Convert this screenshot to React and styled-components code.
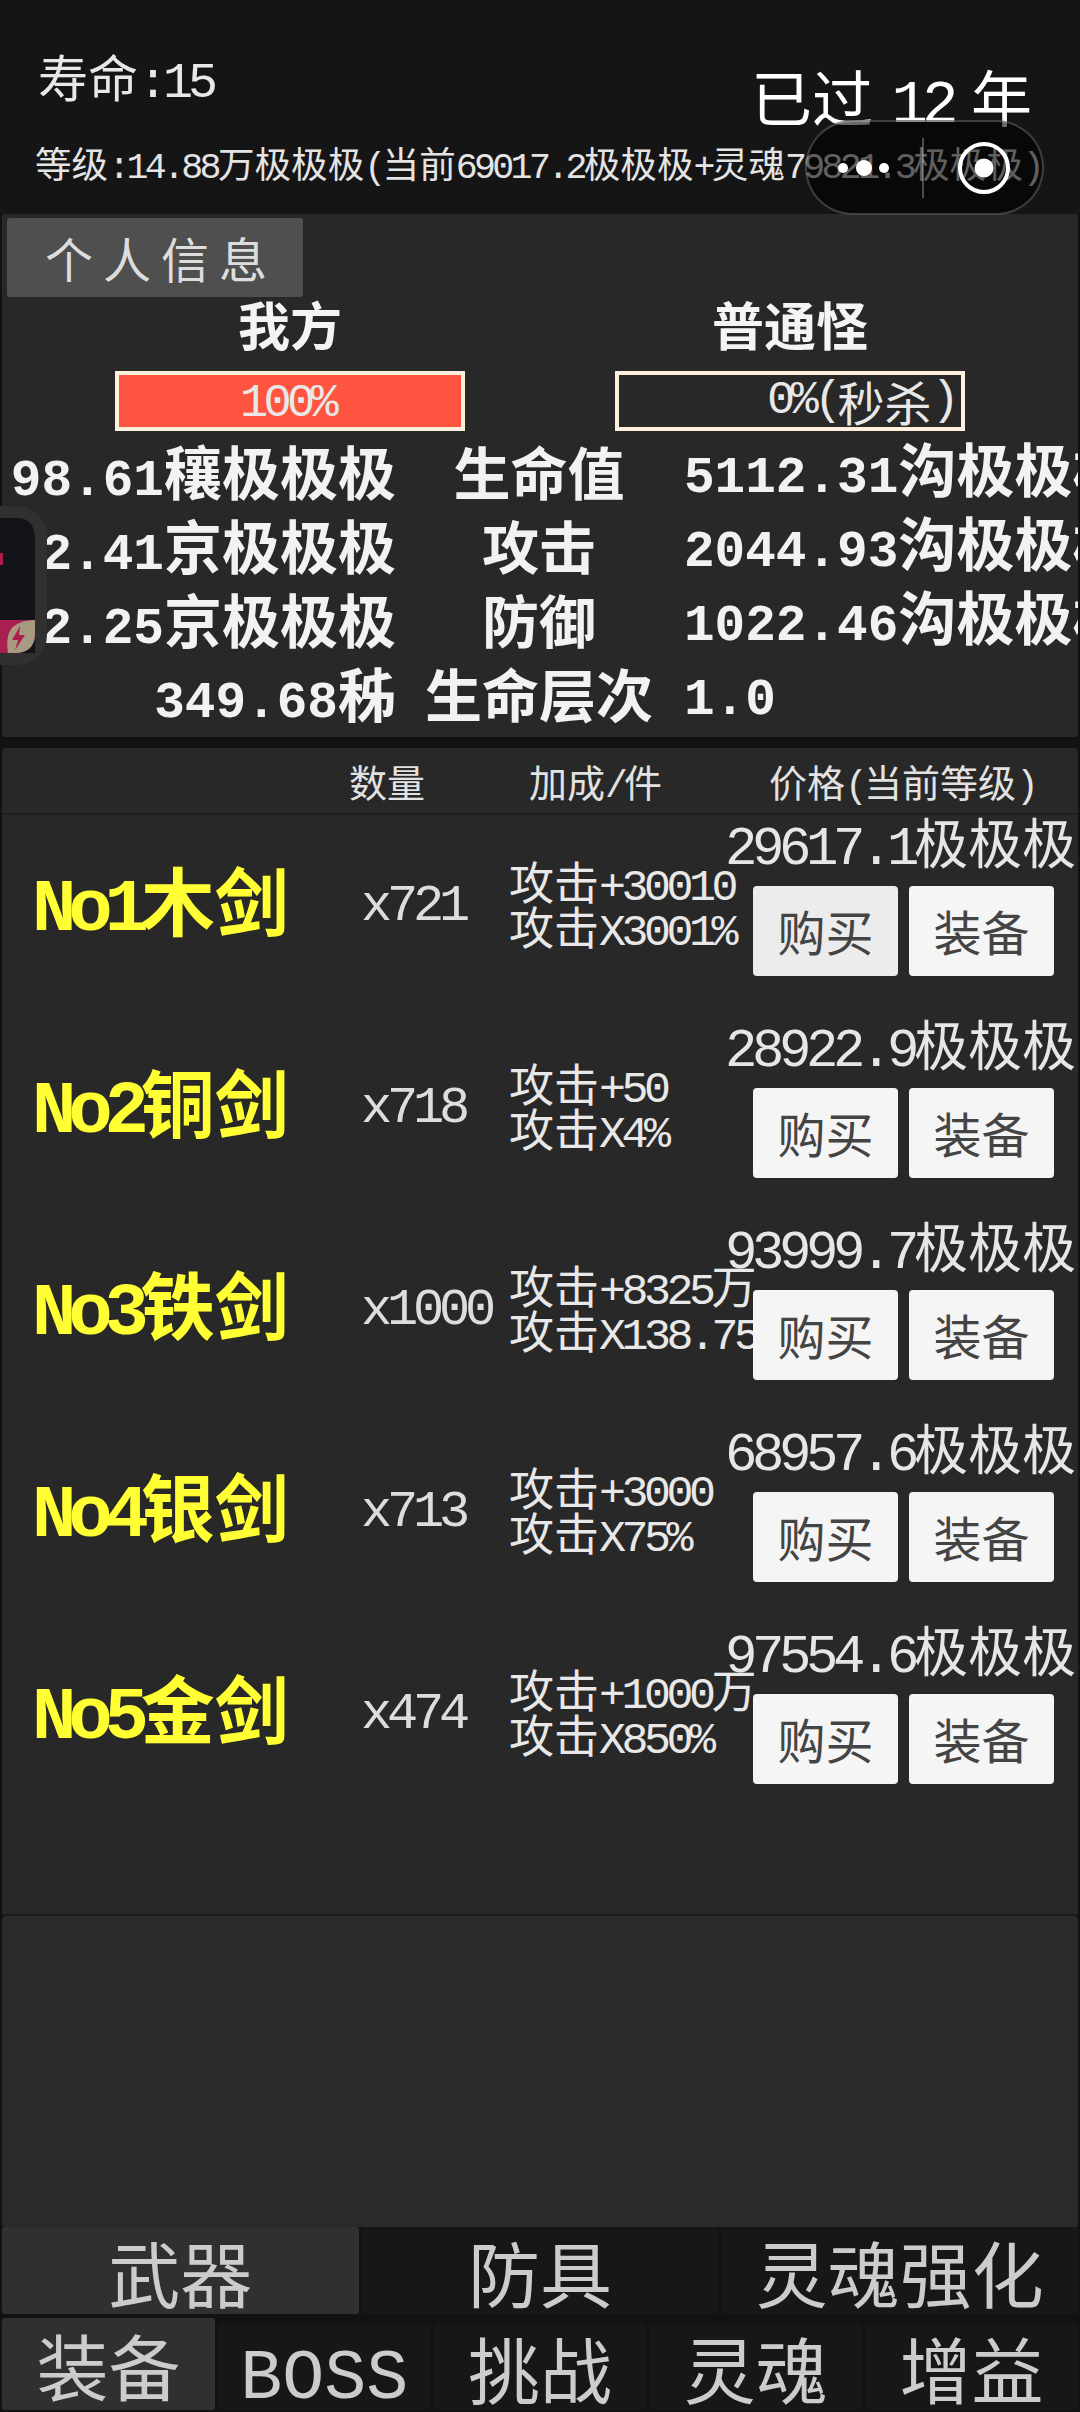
import React from 'react'
import styled, { createGlobalStyle } from 'styled-components'

const Global = createGlobalStyle`
  html, body { margin: 0; padding: 0; background: #121212; }
  body { font-family: "Noto Sans CJK SC", sans-serif; color: #eee; overflow: hidden; }
  * { box-sizing: border-box; }
`

const Lat = styled.span`
  font-family: "Liberation Mono", monospace;
  letter-spacing: -0.1em;
  line-height: 0;
`

// the game uses a half width font for latin, so split the strings
const Mixed = ({ text }) =>
  text.split(/([\x00-\x7f]+)/).map((part, i) =>
    /^[\x00-\x7f]+$/.test(part) ? <Lat key={i}>{part}</Lat> : part
  )

const Page = styled.div`
  position: relative;
  width: 1080px;
  height: 2412px;
  padding-bottom: 2px;
  display: flex;
  flex-direction: column;
  overflow: hidden;
  background: #121212;
`

const Header = styled.header`
  height: 214px;
  padding: 50px 48px 0 38px;
  background: #151515;
`
const HeadTop = styled.div`
  display: flex;
  justify-content: space-between;
  align-items: flex-start;
`
const Life = styled.div`
  font-size: 50px;
  line-height: 50px;
  color: #e8e8e8;
`
const Years = styled.div`
  margin-top: 12px;
  font-size: 61px;
  line-height: 68px;
  color: #fff;
  word-spacing: -12px;
`
const Level = styled.div`
  margin: 12px 0 0 -3px;
  font-size: 36.6px;
  line-height: 42px;
  color: #e4e4e4;
  white-space: nowrap;
`

const Capsule = styled.div`
  position: absolute;
  top: 120px;
  right: 36px;
  width: 239px;
  height: 95px;
  border: 2px solid rgba(255, 255, 255, 0.22);
  border-radius: 48px;
  background: rgba(0, 0, 0, 0.58);
`

const Floater = styled.div`
  position: absolute;
  left: 0;
  top: 506px;
  width: 47px;
  height: 159px;
  border-radius: 0 30px 30px 0;
  background: #303030;
`

const Panel = styled.section`
  margin: 0 2px;
  background: #282828;
  border-radius: 3px;
  overflow: hidden;
`
const TopPanel = styled(Panel)`
  height: 523px;
  padding-top: 4px;
`
const InfoButton = styled.div`
  width: 296px;
  height: 79px;
  margin-left: 5px;
  border-radius: 3px;
  background: #4f4f4f;
  color: #ddd;
  font-size: 48px;
  line-height: 79px;
  letter-spacing: 10px;
  padding-left: 38px;
`
const Sides = styled.div`
  display: grid;
  grid-template-columns: 576px 424px;
  justify-items: center;
`
const SideTitle = styled.div`
  font-size: 52px;
  line-height: 54px;
  margin-bottom: 6px;
  font-weight: 700;
  color: #f4f4f4;
`
const Bar = styled.div`
  width: 350px;
  height: 60px;
  margin-top: 14px;
  border: 4px solid #fdf0dc;
  background: ${p => (p.$full ? '#ff5540' : 'transparent')};
  display: flex;
  align-items: center;
  justify-content: ${p => (p.$full ? 'center' : 'flex-end')};
  padding: ${p => (p.$full ? '5px' : '0')} 6px 0 0;
  font-size: 47px;
  line-height: 52px;
  color: #e8e8e8;
`
const Stats = styled.div`
  margin-top: 2px;
`
const StatRow = styled.div`
  display: grid;
  grid-template-columns: 394px 286px 1fr;
  height: 74px;
  align-items: center;
  font-size: 58px;
  line-height: 74px;
  font-weight: 700;
  color: #f2f2f2;
  white-space: nowrap;
  ${Lat} {
    font-size: 0.88em;
    letter-spacing: 0;
  }
`
const StatLeft = styled.div`
  text-align: right;
`
const StatLabel = styled.div`
  font-size: 57px;
  text-align: center;
`
const StatRight = styled.div`
  margin: -6px 0 0 2px;
`

const ItemPanel = styled(Panel)`
  margin-top: 11px;
  height: 1168px;
  border-bottom: 2px solid #1c1c1c;
`
const ListHead = styled.div`
  display: grid;
  grid-template-columns: 180px 240px auto;
  height: 67px;
  padding-left: 347px;
  align-items: center;
  border-bottom: 2px solid #1e1e1e;
  font-size: 38px;
  line-height: 44px;
  color: #e2e2e2;
  white-space: nowrap;
`
const ItemRow = styled.div`
  display: grid;
  grid-template-columns: 329px 148px 214px 356px;
  height: 202px;
  padding: 0 0 26px 30px;
  align-items: center;
  white-space: nowrap;
`
const ItemName = styled.div`
  margin-bottom: 10px;
  font-size: 74px;
  line-height: 76px;
  font-weight: 700;
  color: #ffff33;
  ${Lat} {
    letter-spacing: -0.11em;
  }
`
const Count = styled.div`
  margin-bottom: 10px;
  font-size: 52px;
  line-height: 60px;
  color: #ddd;
`
const Bonus = styled.div`
  font-size: 45px;
  line-height: 45px;
  color: #e8e8e8;
`
const Actions = styled.div`
  align-self: start;
  position: relative;
`
const Price = styled.div`
  height: 52px;
  margin-left: -6px;
  padding-right: 3px;
  text-align: right;
  font-size: 54px;
  line-height: 52px;
  color: #e6e6e6;
`
const Buttons = styled.div`
  display: flex;
  gap: 11px;
  margin: 19px 0 0 30px;
`
const ActionButton = styled.div`
  width: 145px;
  height: 90px;
  border-radius: 4px;
  background: ${p => (p.$pressed ? '#ececec' : '#f5f5f5')};
  color: #444;
  font-size: 48px;
  line-height: 88px;
  text-align: center;
`

const EmptyPanel = styled(Panel)`
  flex: 1;
  background: #2a2a2a;
`

const TabRow = styled.nav`
  display: flex;
  align-items: flex-end;
  gap: 3px;
  padding: 0 2px;
  margin-top: ${p => p.$top}px;
`
const Tab = styled.div`
  flex: 1;
  height: ${p => (p.$active ? p.$high : p.$low)}px;
  border-radius: 3px;
  background: ${p => (p.$active ? '#303030' : '#171717')};
  color: #ccc;
  font-size: 72px;
  line-height: ${p => (p.$active ? p.$high : p.$low)}px;
  text-align: center;
  white-space: nowrap;
  ${Lat} {
    font-size: 70px;
    letter-spacing: 0;
  }
`

const items = [
  { name: 'No1木剑', count: 'x721', b1: '攻击+30010', b2: '攻击X3001%', price: '29617.1极极极' },
  { name: 'No2铜剑', count: 'x718', b1: '攻击+50', b2: '攻击X4%', price: '28922.9极极极' },
  { name: 'No3铁剑', count: 'x1000', b1: '攻击+8325万', b2: '攻击X138.75%', price: '93999.7极极极' },
  { name: 'No4银剑', count: 'x713', b1: '攻击+3000', b2: '攻击X75%', price: '68957.6极极极' },
  { name: 'No5金剑', count: 'x474', b1: '攻击+1000万', b2: '攻击X850%', price: '97554.6极极极' },
]

const stats = [
  ['98.61穰极极极', '生命值', '5112.31沟极极极'],
  ['2.41京极极极', '攻击', '2044.93沟极极极'],
  ['2.25京极极极', '防御', '1022.46沟极极极'],
  ['349.68秭', '生命层次', '1.0'],
]

const CapsuleIcon = () => (
  <svg width="235" height="91" viewBox="0 0 235 91">
    <circle cx="36" cy="46" r="5" fill="#fff" />
    <circle cx="57" cy="46" r="8" fill="#fff" />
    <circle cx="77" cy="46" r="5" fill="#fff" />
    <rect x="115" y="16" width="2" height="60" fill="rgba(255,255,255,0.28)" />
    <circle cx="177" cy="46" r="24" fill="none" stroke="#fff" strokeWidth="4" />
    <circle cx="177" cy="46" r="9.5" fill="#fff" />
  </svg>
)

const FloaterIcon = () => (
  <svg width="47" height="159" viewBox="0 0 47 159">
    <path d="M0 12H17Q35 12 35 34V147H0Z" fill="#13131a" />
    <rect x="0" y="47" width="3" height="12" fill="#b01c4a" />
    <path d="M0 114H35V127Q35 147 15 147H0Z" fill="#a81f50" />
    <path d="M8 147Q5 127 14 120 22 114 35 114V127Q35 147 15 147Z" fill="#a89a80" />
    <path d="M20 120L12 134H18L15 144 25 129H19Z" fill="#a81f50" />
  </svg>
)

const App = () => (
  <Page>
    <Global />
    <Header>
      <HeadTop>
        <Life><Mixed text="寿命:15" /></Life>
        <Years><Mixed text="已过 12 年" /></Years>
      </HeadTop>
      <Level><Mixed text="等级:14.88万极极极(当前69017.2极极极+灵魂79821.3极极极)" /></Level>
    </Header>

    <TopPanel>
      <InfoButton>个人信息</InfoButton>
      <Sides>
        <SideTitle>我方</SideTitle>
        <SideTitle>普通怪</SideTitle>
        <Bar $full><Mixed text="100%" /></Bar>
        <Bar><Mixed text="0%(秒杀)" /></Bar>
      </Sides>
      <Stats>
        {stats.map(([left, label, right]) => (
          <StatRow key={label}>
            <StatLeft><Mixed text={left} /></StatLeft>
            <StatLabel>{label}</StatLabel>
            <StatRight><Mixed text={right} /></StatRight>
          </StatRow>
        ))}
      </Stats>
    </TopPanel>

    <ItemPanel>
      <ListHead>
        <div>数量</div>
        <div><Mixed text="加成/件" /></div>
        <div><Mixed text="价格(当前等级)" /></div>
      </ListHead>
      {items.map((item, i) => (
        <ItemRow key={item.name}>
          <ItemName><Mixed text={item.name} /></ItemName>
          <Count><Mixed text={item.count} /></Count>
          <Bonus>
            <div><Mixed text={item.b1} /></div>
            <div><Mixed text={item.b2} /></div>
          </Bonus>
          <Actions>
            <Price><Mixed text={item.price} /></Price>
            <Buttons>
              <ActionButton $pressed={i === 0}>购买</ActionButton>
              <ActionButton>装备</ActionButton>
            </Buttons>
          </Actions>
        </ItemRow>
      ))}
    </ItemPanel>

    <EmptyPanel />

    <TabRow $top={0}>
      <Tab $active $high={87} $low={87}>武器</Tab>
      <Tab $high={87} $low={87}>防具</Tab>
      <Tab $high={87} $low={87}>灵魂强化</Tab>
    </TabRow>
    <TabRow $top={4}>
      <Tab $active $high={92} $low={87}>装备</Tab>
      <Tab $high={92} $low={87}><Mixed text="BOSS" /></Tab>
      <Tab $high={92} $low={87}>挑战</Tab>
      <Tab $high={92} $low={87}>灵魂</Tab>
      <Tab $high={92} $low={87}>增益</Tab>
    </TabRow>

    <Capsule><CapsuleIcon /></Capsule>
    <Floater><FloaterIcon /></Floater>
  </Page>
)

export default App
